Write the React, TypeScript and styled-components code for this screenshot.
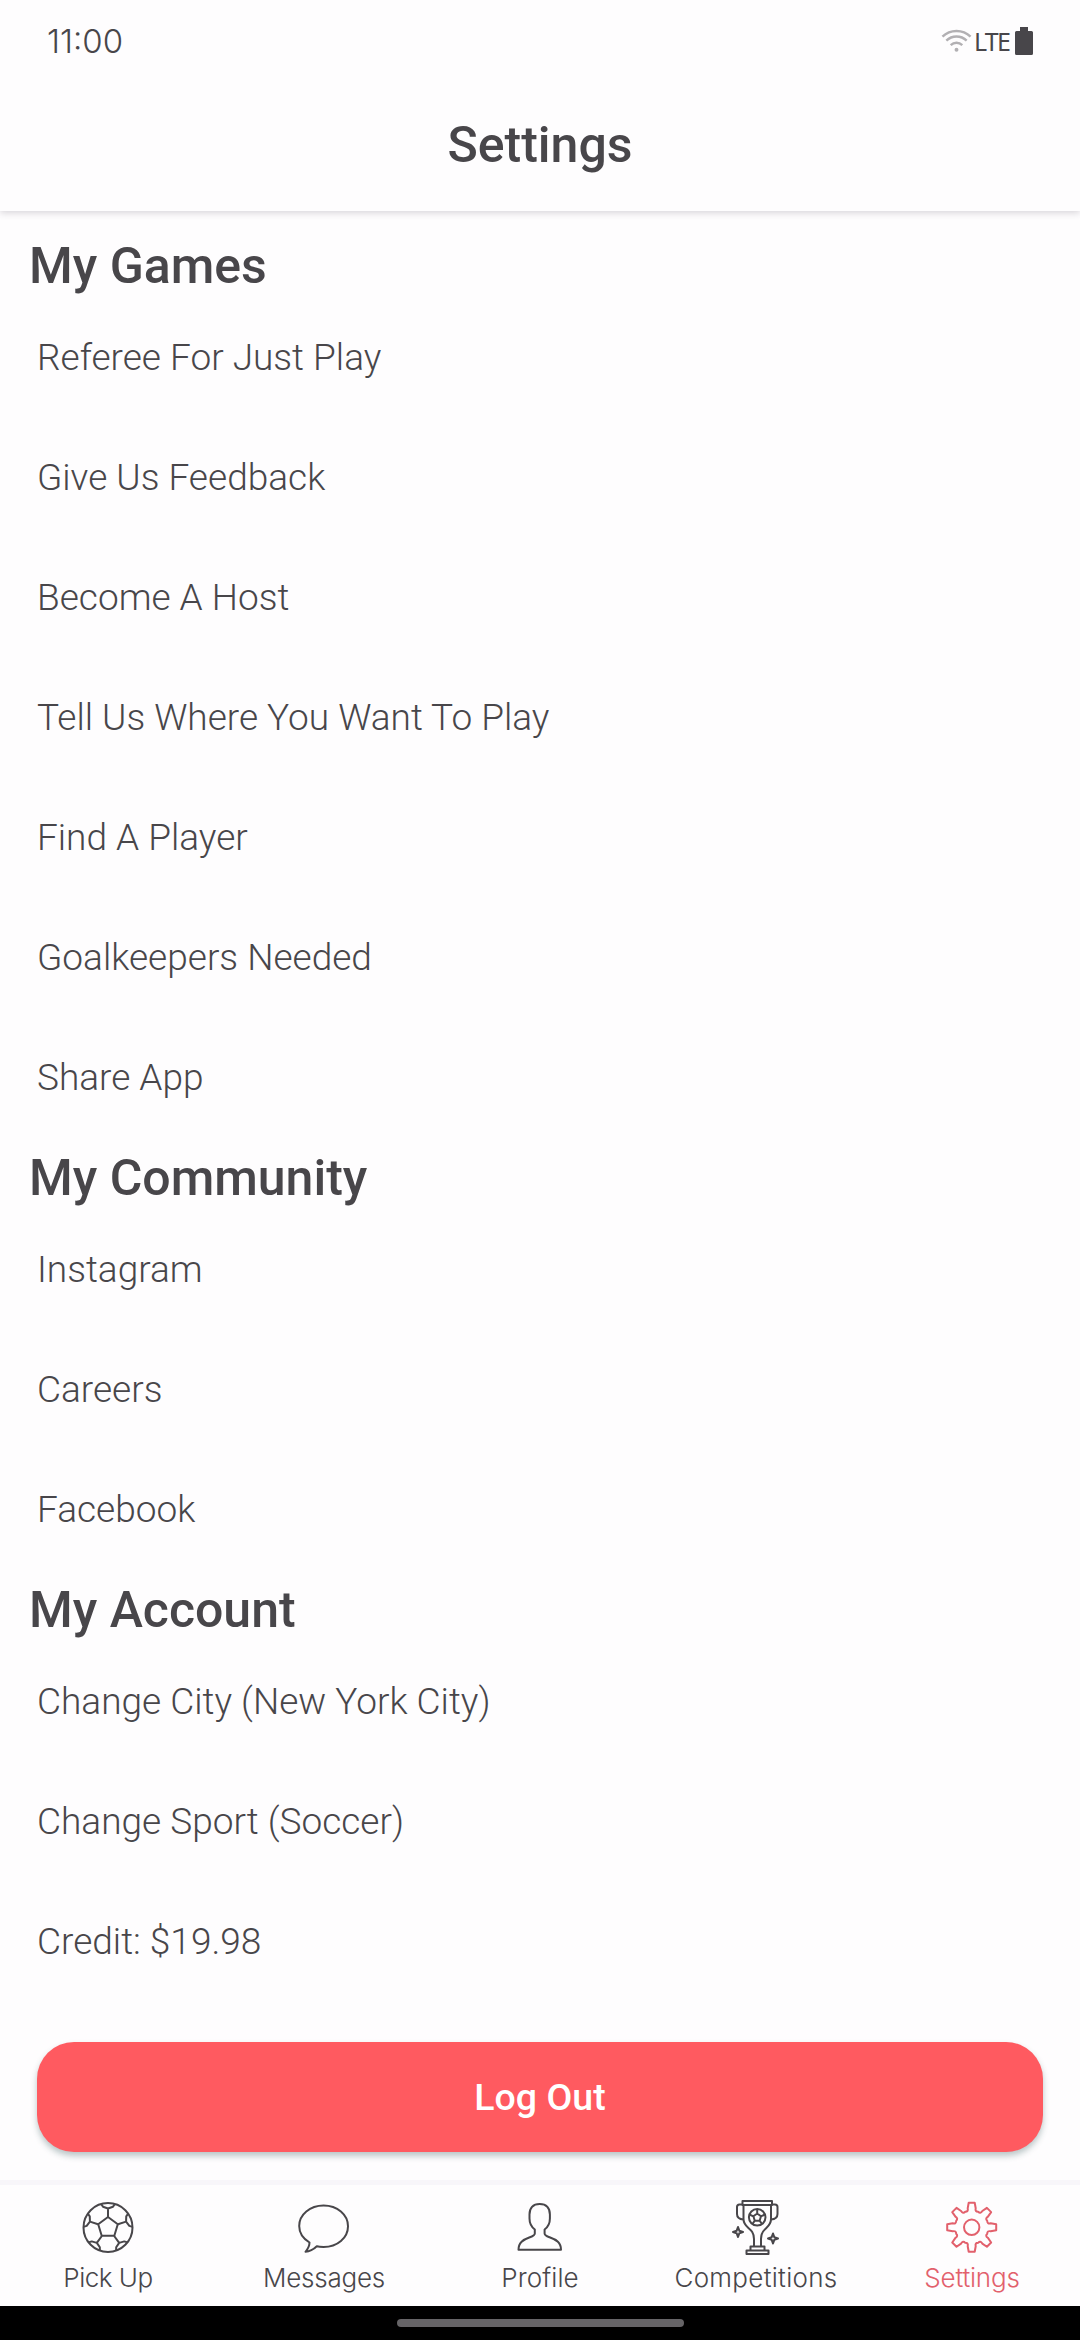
import React from "react";
import styled, { createGlobalStyle } from "styled-components";

const INK = "#48464a";
const CORAL = "#ff5a60";

const Global = createGlobalStyle`
  *, *::before, *::after { box-sizing: border-box; }
  html, body { margin: 0; padding: 0; background: #fefdfe; }
  body { font-family: Roboto, "Noto Sans", sans-serif; color: ${INK}; }
  h1, h2, ul { margin: 0; padding: 0; }
`;

const Screen = styled.div`
  display: flex;
  flex-direction: column;
  width: 1080px;
  height: 2340px;
  overflow: hidden;
  background: #fefdfe;
`;

const StatusBar = styled.div`
  display: flex;
  align-items: center;
  justify-content: space-between;
  flex: none;
  height: 82px;
  padding: 0 47px;
`;

const Clock = styled.span`
  font: 350 33px/40px Inter, sans-serif;
`;

const StatusIcons = styled.div`
  display: flex;
  align-items: center;
`;

const Network = styled.span`
  width: 43px;
  padding-left: 2px;
  font: 400 25px/30px "Noto Sans", sans-serif;
  letter-spacing: -1.8px;
`;

const Header = styled.header`
  display: flex;
  justify-content: center;
  flex: none;
  height: 129px;
  padding-top: 33px;
  box-shadow: 0 2px 7px rgba(60, 50, 70, 0.2);
  clip-path: inset(0 0 -14px 0);
`;

const Title = styled.h1`
  font-size: 50px;
  font-weight: 500;
  line-height: 60px;
`;

const Content = styled.main`
  flex: 1;
  padding-top: 14px;
`;

const SectionTitle = styled.h2`
  height: 72px;
  padding: 9px 0 0 29px;
  font-size: 50px;
  font-weight: 500;
  line-height: 64px;
`;

const List = styled.ul`
  list-style: none;
`;

const Row = styled.li`
  display: flex;
  align-items: center;
  height: 120px;
  padding-left: 37px;
  font-size: 37px;
  font-weight: 300;
`;

const LogOut = styled.button`
  display: block;
  width: 1006px;
  height: 110px;
  margin: 41px 37px 0;
  padding: 0;
  border: 0;
  border-radius: 37px;
  background: ${CORAL};
  box-shadow: 0 4px 6px rgba(30, 70, 70, 0.3);
  color: #fff;
  font: 500 37.5px/110px Roboto, sans-serif;
`;

const TabBar = styled.nav`
  display: grid;
  grid-template-columns: repeat(5, 1fr);
  flex: none;
  height: 126px;
  border-top: 5px solid #f8f6fa;
`;

const Tab = styled.div<{ $active?: boolean }>`
  display: flex;
  flex-direction: column;
  align-items: center;
  padding-top: 12px;
  color: ${(p) => (p.$active ? "#e2606c" : INK)};
`;

const TabIcon = styled.svg`
  display: block;
  flex: none;
  width: 60px;
  height: 60px;
  fill: none;
  stroke: currentColor;
  stroke-width: 2;
  stroke-linejoin: round;
`;

const TabLabel = styled.span<{ $spacing: number }>`
  font: 350 26px/42px Inter, sans-serif;
  letter-spacing: ${(p) => p.$spacing}px;
  white-space: nowrap;
`;

const SystemBar = styled.div`
  display: flex;
  align-items: center;
  justify-content: center;
  flex: none;
  height: 34px;
  background: #000;
`;

const HomeHandle = styled.div`
  width: 287px;
  height: 8px;
  border-radius: 4px;
  background: #666467;
`;

const WifiIcon = () => (
  <svg width="31" height="26" viewBox="0 0 32 26" fill="none" stroke="#b2b0b3" strokeWidth="2.5">
    <path d="M1.5 8.5C9.5.7 22.5.7 30.5 8.5M5.5 12.700C11.500 7 20.500 7 26.500 12.700M10 17.200C13.500 14 18.500 14 22 17.200" />
    <circle cx="16" cy="22" r="2" fill="#b2b0b3" stroke="none" />
  </svg>
);

const BatteryIcon = () => (
  <svg width="18" height="28" viewBox="0 0 18 28" fill={INK}>
    <path d="M5 0h8v4h3.500q1.500 0 1.500 1.500v21q0 1.500-1.500 1.500h-15Q0 28 0 26.500v-21Q0 4 1.500 4H5z" />
  </svg>
);

const ballSpokes = [0, 72, 144, 216, 288];

const BallIcon = () => (
  <TabIcon viewBox="0 0 60 60">
    <circle cx="30" cy="30.500" r="24.500" />
    <path d="M30 20L39.800 27.200L36.300 38.800H23.700L20.200 27.200Z" />
    {ballSpokes.map((angle) => (
      <path
        key={angle}
        transform={`rotate(${angle} 30 30.500)`}
        d="M30 20V11.500M23 7L25 9.700L30 11.500L35 9.700L37 7"
      />
    ))}
  </TabIcon>
);

const MessageIcon = () => (
  <TabIcon viewBox="0 0 60 60">
    <path d="M15.500 45.500C9 41.500 5.200 35.500 5.200 29C5.200 17.500 16 8.500 29.600 8.500S54 17.500 54 29.200S43.300 50 29.600 50C27 50 24.800 49.900 22.800 49.300C19.500 52.500 16 54.500 11.500 54.800C13.800 52 15.500 49.500 15.500 45.500Z" />
  </TabIcon>
);

const ProfileIcon = () => (
  <TabIcon viewBox="0 0 60 60">
    <path d="M29.700 7C22.700 7 19.500 11.500 19.500 17.500V21.500C19.500 26 21.500 30 24.800 32.500V36.500C24.800 38.500 22.800 39.200 19.800 40.300C13 42.800 8.500 45.500 8.500 52.800H51C51 45.500 46.500 42.800 39.600 40.300C36.600 39.200 34.600 38.500 34.600 36.500V32.500C38 30 39.900 26 39.900 21.500V17.500C39.900 11.500 36.700 7 29.700 7Z" />
  </TabIcon>
);

const TrophyIcon = () => (
  <TabIcon viewBox="0 0 60 60">
    <g transform="translate(1 0)">
      <path d="M15.500 4H45V8H15.500ZM16.500 8V22C16.500 32 27 30 27 42V49.500M44 8V22C44 32 34 30 34 42V49.500M23.500 49.500H37.500V53.500H23.500ZM19.500 53.500H41.500V57H19.500Z" />
      <path d="M15.500 7.500H12.500Q10 7.500 10 10V17Q10 22 16.500 22.500M45 7.500H48Q50.500 7.500 50.500 10V17Q50.500 22 44 22.500" />
      <circle cx="30.200" cy="20.300" r="8.300" />
      <path d="M30.200 16.500L34 19.300L32.600 23.700H27.800L26.400 19.300ZM30.200 12V16.500M34 19.300L38 17.500M32.600 23.700L35 27M27.800 23.700L25.400 27M26.400 19.300L22.400 17.500" />
      <path d="M11 30L12.300 33.700L16 35L12.300 36.300L11 40L9.700 36.300L6 35L9.700 33.700ZM46 36.500L47.300 40.200L51 41.500L47.300 42.800L46 46.500L44.700 42.800L41 41.500L44.700 40.200Z" />
    </g>
  </TabIcon>
);

const gearPoint = (tooth: number, x: number, r: number) => {
  const a = (tooth * Math.PI) / 4;
  const px = 29.7 + x * Math.cos(a) + r * Math.sin(a);
  const py = 30.3 + x * Math.sin(a) - r * Math.cos(a);
  return `${px.toFixed(2)} ${py.toFixed(2)}`;
};

const gearOutline = [0, 1, 2, 3, 4, 5, 6, 7]
  .map(
    (t) =>
      `${t === 0 ? "M" : "L"}${gearPoint(t, -3, 24.5)}L${gearPoint(t, 3, 24.5)}L${gearPoint(t, 4, 19)}` +
      `Q${gearPoint(t + 0.5, -3, 15.5)} ${gearPoint(t + 0.5, 0, 16.8)}Q${gearPoint(t + 0.5, 3, 15.5)} ${gearPoint(t + 1, -4, 19)}`
  )
  .join("");

const GearIcon = () => (
  <TabIcon viewBox="0 0 60 60">
    <circle cx="29.700" cy="30.300" r="7.700" />
    <path d={gearOutline + "Z"} />
  </TabIcon>
);

const sections = [
  {
    title: "My Games",
    items: [
      "Referee For Just Play",
      "Give Us Feedback",
      "Become A Host",
      "Tell Us Where You Want To Play",
      "Find A Player",
      "Goalkeepers Needed",
      "Share App",
    ],
  },
  { title: "My Community", items: ["Instagram", "Careers", "Facebook"] },
  {
    title: "My Account",
    items: ["Change City (New York City)", "Change Sport (Soccer)", "Credit: $19.98"],
  },
];

const tabs = [
  { label: "Pick Up", Icon: BallIcon, spacing: -0.5 },
  { label: "Messages", Icon: MessageIcon, spacing: -0.2 },
  { label: "Profile", Icon: ProfileIcon, spacing: 0.1 },
  { label: "Competitions", Icon: TrophyIcon, spacing: 0.3 },
  { label: "Settings", Icon: GearIcon, spacing: -0.2 },
];

export default function App() {
  return (
    <>
      <Global />
      <Screen>
        <StatusBar>
          <Clock>11:00</Clock>
          <StatusIcons>
            <WifiIcon />
            <Network>LTE</Network>
            <BatteryIcon />
          </StatusIcons>
        </StatusBar>
        <Header>
          <Title>Settings</Title>
        </Header>
        <Content>
          {sections.map((section) => (
            <section key={section.title}>
              <SectionTitle>{section.title}</SectionTitle>
              <List>
                {section.items.map((item) => (
                  <Row key={item}>{item}</Row>
                ))}
              </List>
            </section>
          ))}
          <LogOut>Log Out</LogOut>
        </Content>
        <TabBar>
          {tabs.map(({ label, Icon, spacing }) => (
            <Tab key={label} $active={label === "Settings"}>
              <Icon />
              <TabLabel $spacing={spacing}>{label}</TabLabel>
            </Tab>
          ))}
        </TabBar>
        <SystemBar>
          <HomeHandle />
        </SystemBar>
      </Screen>
    </>
  );
}
